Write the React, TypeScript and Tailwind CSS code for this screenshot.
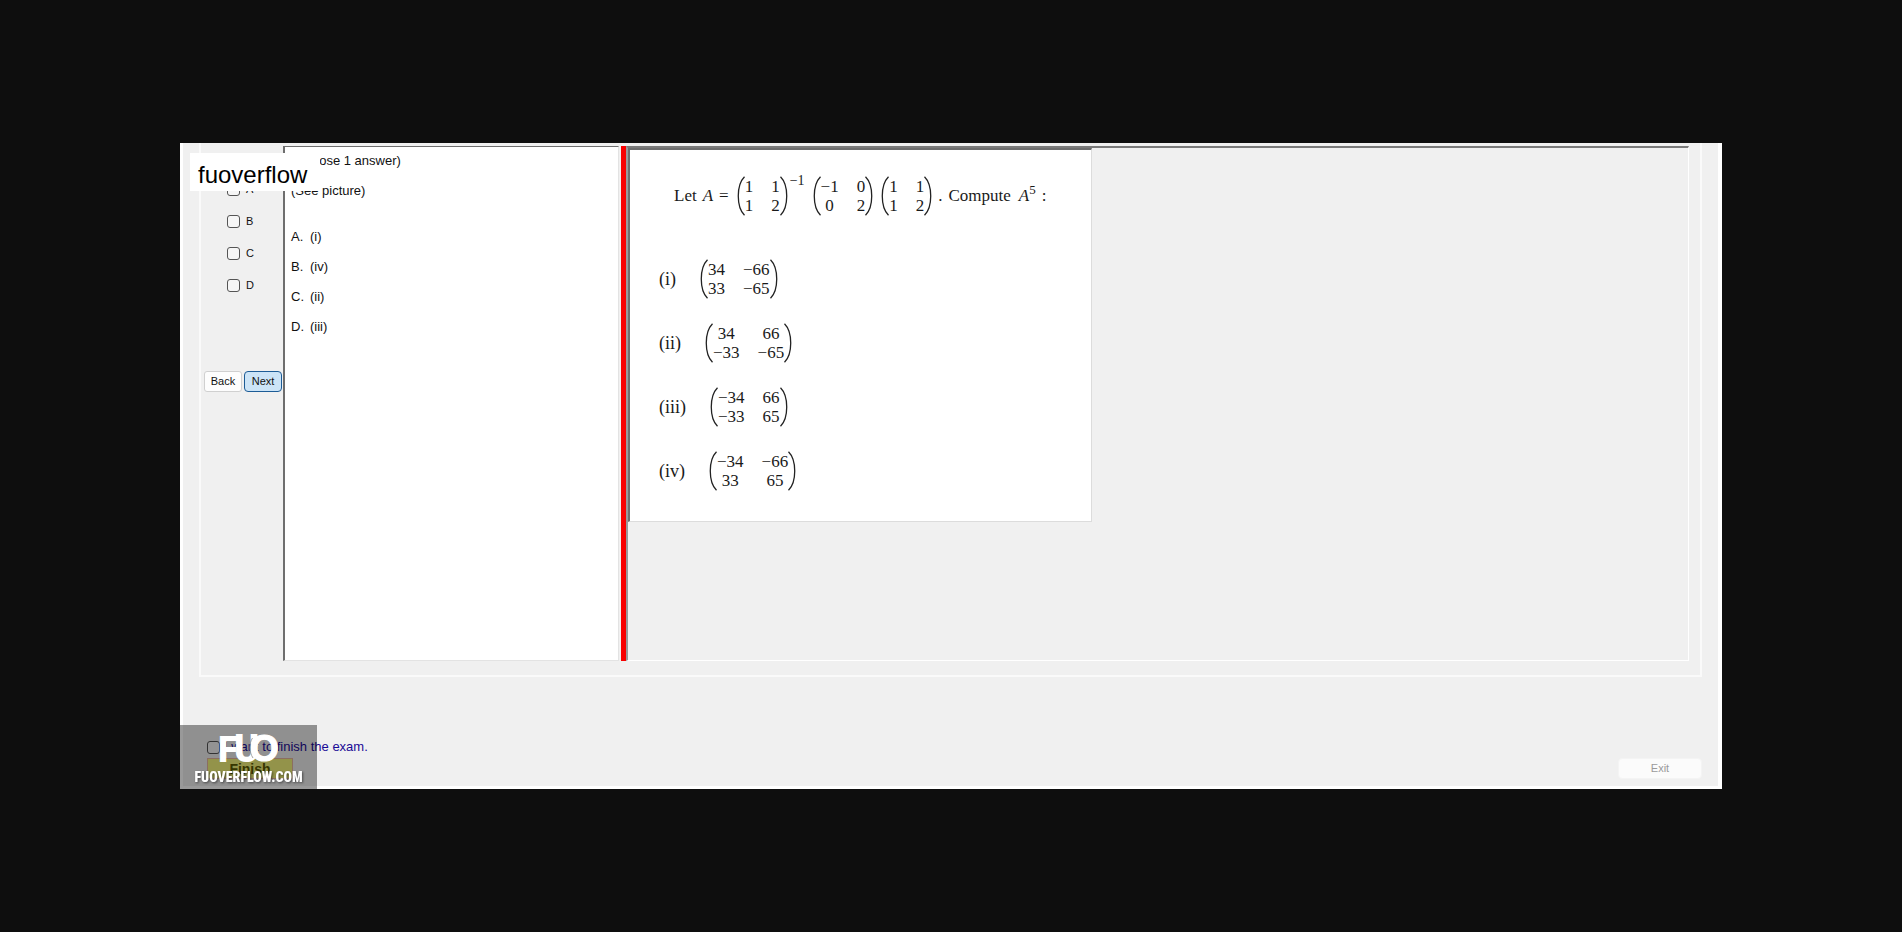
import React from "react";

type Rows = [[string, string], [string, string]];

function Paren({ side }: { side: "left" | "right" }) {
  return (
    <svg
      viewBox="0 0 8 40"
      className="h-10 w-2 shrink-0"
      fill="none"
      stroke="#222"
      strokeWidth="1.3"
      aria-hidden="true"
    >
      {side === "left" ? (
        <path d="M7.5 .7C-.8 9-.8 31 7.5 39.3" />
      ) : (
        <path d="M.5 .7C8.8 9 8.8 31 .5 39.3" />
      )}
    </svg>
  );
}

function Matrix({ rows }: { rows: Rows }) {
  return (
    <span className="flex items-center">
      <Paren side="left" />
      <span className="grid grid-cols-[auto_auto] gap-x-[18px] text-center text-[17px] leading-[19px]">
        {rows.flat().map((cell, i) => (
          <span key={i}>{cell}</span>
        ))}
      </span>
      <Paren side="right" />
    </span>
  );
}

const base: Rows = [
  ["1", "1"],
  ["1", "2"],
];

const options: { label: string; rows: Rows }[] = [
  { label: "(i)", rows: [["34", "−66"], ["33", "−65"]] },
  { label: "(ii)", rows: [["34", "66"], ["−33", "−65"]] },
  { label: "(iii)", rows: [["−34", "66"], ["−33", "65"]] },
  { label: "(iv)", rows: [["−34", "−66"], ["33", "65"]] },
];

const answers = [
  ["A.", "(i)"],
  ["B.", "(iv)"],
  ["C.", "(ii)"],
  ["D.", "(iii)"],
];

const checkbox =
  "size-[13px] shrink-0 appearance-none rounded-[3px] border border-[#555] bg-[#f6f6f6] checked:bg-[#0067c0]";

function Sidebar() {
  return (
    <div className="flex w-[82px] shrink-0 flex-col pt-[27px]">
      <div className="flex flex-col pl-[26px]">
        {["A", "B", "C", "D"].map((c) => (
          <label key={c} className="flex h-8 items-center gap-[6px] text-[11px]">
            <input type="checkbox" className={checkbox} />
            {c}
          </label>
        ))}
      </div>
      <div className="mt-[70px] flex gap-[2px] pl-[3px] text-[11px]">
        <button className="h-[21px] w-[38px] rounded-[3px] border border-[#d0d0d0] bg-[#fdfdfd]">
          Back
        </button>
        <button className="h-[21px] w-[38px] rounded-[4px] border border-[#1d5c96] bg-[#cce4f7]">
          Next
        </button>
      </div>
    </div>
  );
}

function QuestionText() {
  return (
    <div className="w-[336px] shrink-0 border-t border-r border-b border-l-2 border-t-[#6e6e6e] border-r-[#e3e3e3] border-b-[#e3e3e3] border-l-[#6e6e6e] bg-white pl-[6px] text-[13px] leading-[30px]">
      <p className="-mt-px">(Choose 1 answer)</p>
      <p>(See picture)</p>
      <ul className="pt-4">
        {answers.map(([k, v]) => (
          <li key={k} className="flex">
            <span className="w-[19px]">{k}</span>
            {v}
          </li>
        ))}
      </ul>
    </div>
  );
}

function Picture() {
  return (
    <div className="h-[374px] w-[464px] border-t-2 border-r border-b border-l-2 border-t-[#6e6e6e] border-r-[#dcdcdc] border-b-[#dcdcdc] border-l-[#6e6e6e] bg-white font-['Liberation_Serif',serif] text-[#1a1a1a]">
      <div className="flex items-center pt-[26px] pl-11 text-[17px] whitespace-nowrap">
        <span className="mr-[6px]">Let</span>
        <i className="mr-[6px]">A</i>
        <span className="mr-2">=</span>
        <Matrix rows={base} />
        <span className="mr-2 ml-[2px] -mt-8 text-[14px]">−1</span>
        <Matrix rows={[["−1", "0"], ["0", "2"]]} />
        <span className="w-2" />
        <Matrix rows={base} />
        <span className="mr-[6px] ml-[6px]">.</span>
        <span className="mr-2">Compute</span>
        <i>A</i>
        <span className="mr-[6px] -mt-3 text-[13px]">5</span>
        <span>:</span>
      </div>
      <ul className="flex flex-col gap-6 pt-[43px] pl-[29px]">
        {options.map(({ label, rows }) => (
          <li key={label} className="flex items-center gap-6">
            <span className="text-[18px] leading-none">{label}</span>
            <Matrix rows={rows} />
          </li>
        ))}
      </ul>
    </div>
  );
}

function Watermark() {
  return (
    <div className="pointer-events-none flex h-16 w-[137px] flex-col items-center bg-black/40 pt-[9px] text-white">
      <svg
        viewBox="0 0 60 28"
        className="h-7 w-[60px] overflow-visible"
        role="img"
        aria-label="FUO"
        fill="#fff"
        fontWeight="900"
      >
        <text x="-1" y="27.5" fontSize="36" fontFamily="Roboto, sans-serif">
          F
        </text>
        <text x="15" y="27.5" fontSize="38" fontFamily="Roboto, sans-serif">
          U
        </text>
        <text
          x="31"
          y="27"
          fontSize="37"
          fontFamily="'Liberation Sans', sans-serif"
          stroke="#fff"
          strokeWidth="1.2"
        >
          O
        </text>
        <path d="M33.5 4C30 9 30 18 34 24" fill="none" stroke="#8f8f8f" strokeWidth="0.8" />
      </svg>
      <span className="mt-[6px] font-['Roboto_Condensed','Liberation_Sans_Narrow',sans-serif] text-[14px] leading-[18px] font-black drop-shadow-[1px_1px_1px_rgba(0,0,0,0.5)]">
        FUOVERFLOW.COM
      </span>
    </div>
  );
}

export default function App() {
  return (
    <div className="flex min-h-screen items-center bg-[#0e0e0e] px-[180px] font-['Liberation_Sans',Arial,sans-serif] text-[#111]">
      <main className="relative flex min-w-0 flex-1 flex-col border-r-4 border-b-[3px] border-l-[3px] border-white bg-[#f0f0f0] px-4">
        <section className="flex border-r-2 border-b-2 border-l-2 border-[#fafafa] pt-[3px] pr-[11px] pb-[14px]">
          <Sidebar />
          <QuestionText />
          <div className="ml-[2px] w-[5px] shrink-0 bg-[#f80000]" />
          <div className="min-h-[515px] min-w-0 flex-1 border-t-2 border-r border-b border-l-2 border-t-[#7a7a7a] border-r-white border-b-white border-l-[#9a9a9a]">
            <Picture />
          </div>
        </section>
        <footer className="flex items-end justify-between pt-[60px] pb-[7px]">
          <div className="flex flex-col items-start pl-2">
            <label className="flex items-center gap-1 text-[13px] leading-[20px] text-[#1a0a96]">
              <input type="checkbox" className={checkbox} />
              I want to finish the exam.
            </label>
            <button className="mt-px h-[21px] w-[86px] border border-[#e8b8a0] bg-[#f6f67c] text-[14px] leading-none font-bold text-[#5a5a00]">
              Finish
            </button>
          </div>
          <button
            disabled
            className="h-[21px] w-[84px] rounded-[4px] border border-[#f4f4f4] bg-[#fbfbfb] text-[11px] text-[#9a9a9a]"
          >
            Exit
          </button>
        </footer>
        <div className="absolute top-[10px] left-[7px] h-[38px] w-[130px] bg-white pl-2 text-[24px] leading-[43px] text-black">
          fuoverflow
        </div>
        <div className="absolute -bottom-[3px] -left-[3px]">
          <Watermark />
        </div>
      </main>
    </div>
  );
}
